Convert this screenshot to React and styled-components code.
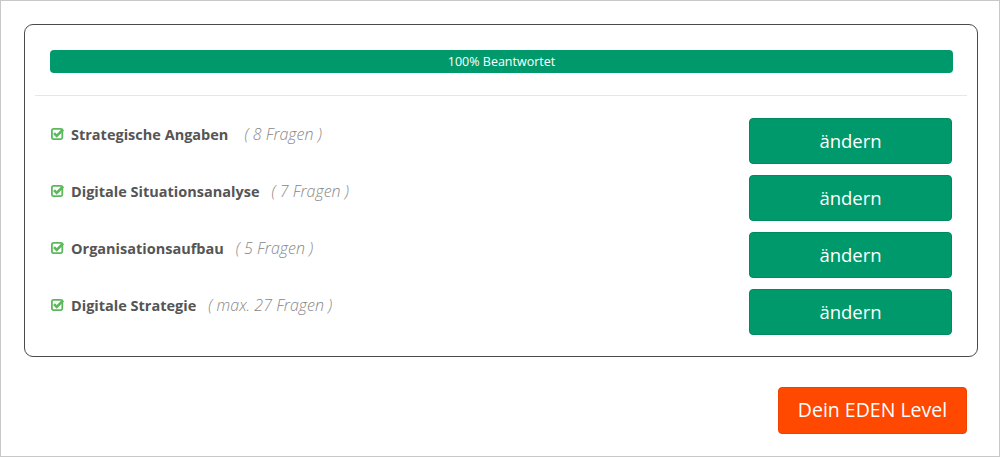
import styled, { createGlobalStyle } from "styled-components";

const GlobalStyle = createGlobalStyle`
  html, body {
    margin: 0;
    padding: 0;
    background: #fff;
  }
  body {
    font-family: "Open Sans", "Noto Sans", sans-serif;
  }
`;

const Frame = styled.div`
  box-sizing: border-box;
  width: 1000px;
  height: 457px;
  border: 1px solid #c8c8c8;
  padding: 23px 21px 0 23px;
  display: flex;
  flex-direction: column;
`;

const Card = styled.div`
  border: 1px solid #4a4a4a;
  border-radius: 9px;
  padding: 25px 10px 21px 10px;
`;

const ProgressWrap = styled.div`
  padding: 0 14px 22px 15px;
  border-bottom: 1px solid #e6e6e6;
`;

const Progress = styled.div`
  height: 23px;
  border-radius: 4px;
  background: #00996b;
  color: #fff;
  font-size: 12.5px;
  display: flex;
  align-items: center;
  justify-content: center;
`;

const List = styled.div`
  padding: 22px 15px 0 16px;
  display: flex;
  flex-direction: column;
  gap: 11px;
`;

const Row = styled.div`
  display: flex;
  align-items: center;
  justify-content: space-between;
  height: 46px;
`;

const Label = styled.div`
  display: flex;
  align-items: baseline;
  margin-top: -15px;
`;

const Check = styled.svg`
  width: 13px;
  height: 12px;
  margin-right: 7px;
  align-self: center;
`;

const Title = styled.span`
  font-weight: 700;
  font-size: 14.5px;
  color: #555;
`;

const Count = styled.span`
  font-style: italic;
  font-weight: 300;
  font-size: 16px;
  color: #888;
  margin-left: ${(p) => p.$gap}px;
`;

const EditButton = styled.button`
  width: 203px;
  height: 46px;
  padding: 0 0 2px;
  border: 1px solid #008a5f;
  border-radius: 4px;
  background: #00996b;
  color: #fff;
  font-family: inherit;
  font-size: 18.5px;
  cursor: pointer;
`;

const Footer = styled.div`
  display: flex;
  justify-content: flex-end;
  padding-top: 30px;
`;

const LevelButton = styled.button`
  width: 189px;
  height: 47px;
  padding: 0 0 2px;
  border: 1px solid #f04300;
  border-radius: 4px;
  background: #ff4800;
  color: #fff;
  font-family: inherit;
  font-size: 19.5px;
  cursor: pointer;
  margin-right: 11px;
`;

function CheckIcon() {
  return (
    <Check viewBox="0 0 13 12">
      <rect x="0.9" y="0.9" width="10.4" height="10.2" rx="1.5" fill="none" stroke="#5cb85c" strokeWidth="1.8" />
      <path d="M3 5.2 L5.7 7.9 L12.2 1.4" fill="none" stroke="#5cb85c" strokeWidth="2.6" />
    </Check>
  );
}

const sections = [
  { title: "Strategische Angaben", count: "( 8 Fragen )", gap: 16 },
  { title: "Digitale Situationsanalyse", count: "( 7 Fragen )", gap: 12 },
  { title: "Organisationsaufbau", count: "( 5 Fragen )", gap: 12 },
  { title: "Digitale Strategie", count: "( max. 27 Fragen )", gap: 12 },
];

export default function App() {
  return (
    <>
      <GlobalStyle />
      <Frame>
        <Card>
          <ProgressWrap>
            <Progress>100% Beantwortet</Progress>
          </ProgressWrap>
          <List>
            {sections.map((s) => (
              <Row key={s.title}>
                <Label>
                  <CheckIcon />
                  <Title>{s.title}</Title>
                  <Count $gap={s.gap}>{s.count}</Count>
                </Label>
                <EditButton>ändern</EditButton>
              </Row>
            ))}
          </List>
        </Card>
        <Footer>
          <LevelButton>Dein EDEN Level</LevelButton>
        </Footer>
      </Frame>
    </>
  );
}
